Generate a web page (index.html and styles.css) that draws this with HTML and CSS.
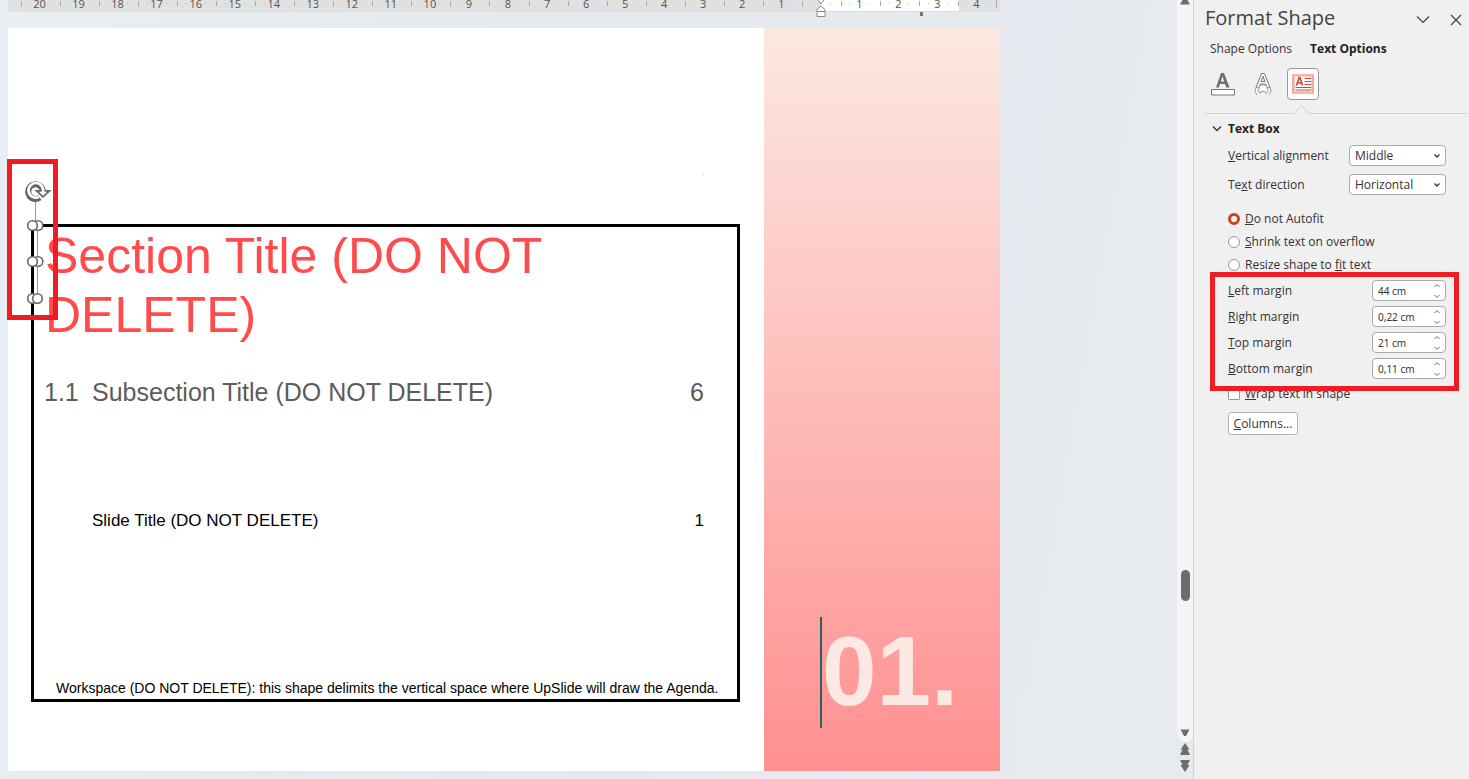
FILE: index.html
```html
<!DOCTYPE html>
<html lang="en">
<head>
<meta charset="utf-8">
<title>Format Shape</title>
<link rel="stylesheet" href="styles.css">
</head>
<body>
<div class="app">
  <main class="editor">
    <div class="ruler">
      <div class="ruler-active"></div>
      <div class="ruler-scale">
        <span>20</span><span>19</span><span>18</span><span>17</span><span>16</span><span>15</span><span>14</span><span>13</span><span>12</span><span>11</span><span>10</span><span>9</span><span>8</span><span>7</span><span>6</span><span>5</span><span>4</span><span>3</span><span>2</span><span>1</span><span></span><span>1</span><span>2</span><span>3</span><span>4</span>
      </div>
      <svg class="indent" viewBox="0 0 10 17" width="10" height="17" aria-hidden="true"><path d="M2 0 5 4 8 0M1 16.500V9.500L5 6l4 3.500v7zM1 11.500h8" fill="#fff" stroke="#888"/></svg>
      <div class="tab-stop"></div>
    </div>
    <section class="slide">
      <div class="slide-main">
        <div class="workspace">
          <h1 class="section-title">Section Title (DO NOT DELETE)</h1>
          <div class="subsection"><span class="num">1.1</span><span class="name">Subsection Title (DO NOT DELETE)</span><span>6</span></div>
          <div class="slide-row"><span class="name">Slide Title (DO NOT DELETE)</span><span>1</span></div>
          <p class="note">Workspace (DO NOT DELETE): this shape delimits the vertical space where UpSlide will draw the Agenda.</p>
        </div>
      </div>
      <div class="band"><div class="big-number">01.</div></div>
      <svg class="handles" viewBox="0 150 60 175" width="60" height="175" aria-hidden="true">
        <path d="M35.500 202v24M37.500 226v72" stroke="#999" fill="none"/>
        <g fill="#fff" stroke="#666" stroke-width="1.600">
          <circle cx="38" cy="225.500" r="4.800"/><circle cx="32.500" cy="225.500" r="4.800"/>
          <circle cx="38" cy="261.500" r="4.800"/><circle cx="32.500" cy="261.500" r="4.800"/>
          <circle cx="32.500" cy="298.500" r="4.800"/><circle cx="37.500" cy="298.500" r="4.800"/>
        </g>
        <path d="M39.800 197.600A7.300 7.300 0 1 1 42.800 191" fill="none" stroke="#666" stroke-width="6"/>
        <path d="M36.500 190.800h13l-6.500 6z" fill="#fff" stroke="#666" stroke-width="1.700"/>
        <path d="M39 196.900A7.300 7.300 0 1 1 42.800 192.500" fill="none" stroke="#fff" stroke-width="2.600"/>
      </svg>
      <div class="callout callout-handles"></div>
      <div class="speck"></div>
    </section>
  </main>

  <div class="scroll">
    <div class="track">
      <svg class="up" viewBox="0 0 10 5" width="10" height="5" aria-hidden="true"><path d="M3-1h4l3 5.500H0z" fill="#6d6d6d"/></svg>
      <div class="thumb"></div>
      <svg viewBox="0 0 10 8" width="10" height="8" aria-hidden="true"><path d="M.5.500h9L6 7H4z" fill="#6d6d6d"/></svg>
    </div>
    <svg viewBox="0 0 10 30" width="10" height="30" aria-hidden="true"><path d="M5 0l4.500 6.500h-2L10 12H0l2.500-5.500h-2zM0 17h10L7.500 22h2L5 29 .500 22h2z" fill="#6d6d6d"/></svg>
  </div>

  <aside class="pane">
    <header class="pane-head">
      <h2>Format Shape</h2>
      <button class="plain" aria-label="Pane options"><svg viewBox="0 0 14 10" width="14" height="10"><path d="M1 1.500l6 6 6-6" fill="none" stroke="#444" stroke-width="1.200"/></svg></button>
      <button class="plain" aria-label="Close"><svg viewBox="0 0 12 12" width="12" height="12"><path d="M1 1l10 10M11 1L1 11" fill="none" stroke="#444" stroke-width="1.200"/></svg></button>
    </header>
    <nav class="tabs"><button class="plain">Shape Options</button><button class="plain on">Text Options</button></nav>
    <div class="tools">
      <button class="plain tool" aria-label="Text fill and outline"><svg viewBox="0 0 26 24" width="26" height="24"><path d="M6 15.500 11 1h3l5.500 14.500h-3.300l-1.200-3.500H10l-1.100 3.500zM10.800 9.500h3.400L12.500 4z" fill="#6f6f6f"/><path d="M1.500 17.500h23v5.500h-23z" fill="#fff" stroke="#757575"/></svg></button>
      <button class="plain tool" aria-label="Text effects"><svg viewBox="0 0 18 24" width="18" height="24"><g fill="#fff" stroke="#777"><path d="M2 15.500 7.500 1.500h3L16 15.500h-3l-1.300-3.500H6.300L5 15.500zM7 9.500h4L9 4.200z"/><path d="M5 15.500 6.500 13h5l1.500 2.500h3l1 3.500-2 4M13 15.500l1 3-2 3-1-2H7l-1 2-2-3 1-3H2l-1 3.500 2 4" stroke="#999"/></g></svg></button>
      <button class="plain tool selected" aria-label="Text box"><svg viewBox="0 0 22 20" width="22" height="20"><path d="M1 1h20v18H1z" fill="#fff" stroke="#e9755c" stroke-width="1.200"/><path d="M2.500 2.500h17v15h-17z" fill="none" stroke="#f3b5a7" stroke-width=".8"/><path d="M4.500 11.500 7 3.800h1l2.500 7.700M5.500 9h4" fill="none" stroke="#d0482c" stroke-width="1.700"/><path d="M12.500 4.500H19M12.500 7.500H19M12.500 10.500H19M3.500 13.500H19M3.500 16H19" stroke="#d0482c"/></svg></button>
    </div>
    <svg class="divider" viewBox="0 0 262 10" width="262" height="10" aria-hidden="true"><path d="M0 8.500h89l7.500-8 7.500 8h158" fill="none" stroke="#cfcfcf"/></svg>

    <h3 class="group"><svg viewBox="0 0 10 8" width="10" height="8" aria-hidden="true"><path d="M1 1.500l4 4 4-4" fill="none" stroke="#333" stroke-width="1.300"/></svg>Text Box</h3>
    <div class="body">
      <div class="row select-row"><label for="va"><u>V</u>ertical alignment</label><select id="va"><option>Middle</option></select></div>
      <div class="row select-row"><label for="td">Te<u>x</u>t direction</label><select id="td"><option>Horizontal</option></select></div>
      <div class="radios">
        <label><input type="radio" name="fit" checked><span><u>D</u>o not Autofit</span></label>
        <label><input type="radio" name="fit"><span><u>S</u>hrink text on overflow</span></label>
        <label><input type="radio" name="fit"><span>Resize shape to <u>f</u>it text</span></label>
      </div>
      <div class="margins">
        <div class="row"><label for="ml"><u>L</u>eft margin</label><div class="spin"><input id="ml" type="text" value="44 cm"><svg viewBox="0 0 8 16" width="8" height="16" aria-hidden="true"><path d="M1.500 4 4 1.500 6.500 4M1.500 12 4 14.500 6.500 12"/></svg></div></div>
        <div class="row"><label for="mr"><u>R</u>ight margin</label><div class="spin"><input id="mr" type="text" value="0,22 cm"><svg viewBox="0 0 8 16" width="8" height="16" aria-hidden="true"><path d="M1.500 4 4 1.500 6.500 4M1.500 12 4 14.500 6.500 12"/></svg></div></div>
        <div class="row"><label for="mt"><u>T</u>op margin</label><div class="spin"><input id="mt" type="text" value="21 cm"><svg viewBox="0 0 8 16" width="8" height="16" aria-hidden="true"><path d="M1.500 4 4 1.500 6.500 4M1.500 12 4 14.500 6.500 12"/></svg></div></div>
        <div class="row"><label for="mb"><u>B</u>ottom margin</label><div class="spin"><input id="mb" type="text" value="0,11 cm"><svg viewBox="0 0 8 16" width="8" height="16" aria-hidden="true"><path d="M1.500 4 4 1.500 6.500 4M1.500 12 4 14.500 6.500 12"/></svg></div></div>
        <div class="callout callout-margins"></div>
      </div>
      <label class="wrap"><input type="checkbox"><span><u>W</u>rap text in shape</span></label>
      <button class="columns"><u>C</u>olumns...</button>
    </div>
  </aside>
</div>
</body>
</html>
```
FILE: styles.css
```css
* { box-sizing: border-box; }
body { margin: 0; font: 12px/18px "Open Sans", "Noto Sans", sans-serif; color: #333; background: #e7ebef; }
h1, h2, h3, p { margin: 0; font-weight: 400; }
button, input, select { font: inherit; color: inherit; margin: 0; }
.plain { border: 0; background: none; padding: 0; }
.app { display: flex; min-height: 100vh; }

.editor { flex: 1; min-width: 0; display: flex; flex-direction: column; padding: 0 177px 8px 8px; background: linear-gradient(100deg, #e8eef1, #e5e8ee 50%, #e7ebf0); }
.ruler { position: relative; height: 12px; background: #e1e1e1; border-bottom: 1px solid #dcdfe2; padding: 0 3px 0 12px; }
.ruler-active { position: absolute; top: 0; left: 813px; width: 138px; height: 11px; background: #fff; }
.ruler-scale { position: relative; display: grid; grid-template-columns: repeat(25, 1fr); font-size: 11px; line-height: 8px; height: 8px; text-align: center; color: #555;
  border-right: 1px solid #aaa; }
.ruler-scale span { background:
  linear-gradient(#aaa, #aaa) 1px 1px / 1px 5px no-repeat,
  linear-gradient(#bbb, #bbb) 10px 3px / 1px 1px no-repeat,
  linear-gradient(#bbb, #bbb) 29px 3px / 1px 1px no-repeat; }
.indent { position: absolute; left: 808px; top: 0; }
.tab-stop { position: absolute; left: 912px; top: 12px; width: 3px; height: 4px; background: #777; }

.slide { position: relative; flex: 1; display: flex; margin-top: 16px; background: #fff; font-family: "Liberation Sans", Arial, sans-serif; }
.slide-main { flex: 1; min-width: 0; display: flex; padding: 196px 24px 69px 23px; }
.workspace { flex: 1; min-width: 0; display: flex; flex-direction: column; border: 3px solid #000; padding: 0 8px 2px; color: #000; }
.section-title { font-size: 50px; line-height: 59px; color: #ff4b4b; padding: 0 150px 0 3px; }
.subsection, .slide-row { display: flex; padding-right: 25px; }
.subsection { margin-top: 32px; padding-left: 2px; font-size: 25px; line-height: 30px; color: #5c5c5c; }
.subsection .num { width: 48px; }
.name { flex: 1; }
.slide-row { margin-top: 104px; padding-left: 50px; font-size: 17px; line-height: 20px; }
.note { margin-top: auto; padding-left: 14px; font-size: 14px; line-height: 18px; white-space: nowrap; }
.band { width: 236px; display: flex; align-items: flex-end; padding: 0 0 43px 56px; background: linear-gradient(#fce8e2, #ff9090); }
.big-number { border-left: 2px solid #2a6062; font-size: 98px; line-height: 109px; padding-bottom: 2px; font-weight: 700; color: #fde9e3; }
.handles { position: absolute; left: -8px; top: 122px; }
.callout { position: absolute; border: 5px solid #ee1c25; pointer-events: none; }
.callout-handles { left: -1px; top: 131px; width: 51px; height: 161px; }
.speck { position: absolute; left: 695px; top: 146px; width: 1px; height: 1px; background: #bbb; }

.scroll { width: 16px; display: flex; flex-direction: column; align-items: center; padding-bottom: 6px; gap: 1px; background: #e6eaef; }
.track { flex: 1; width: 100%; display: flex; flex-direction: column; align-items: center; justify-content: space-between; padding-bottom: 5px; background: #f5f5f5; border-radius: 0 0 8px 8px; }
.thumb { width: 9px; height: 31px; border-radius: 5px; background: #6d6d6d; margin: 436px 0 0; }

.pane { width: 276px; background: #f0f0f0; border-left: 1px solid #d4d4d4; padding: 4px 3px 0 11px; }
.pane-head { display: flex; align-items: center; gap: 20px; height: 28px; padding-right: 4px; }
.pane-head h2 { flex: 1; font-size: 20px; line-height: 28px; color: #444; }
.pane-head button { height: 12px; line-height: 0; margin-top: 4px; }
.tabs { display: flex; gap: 18px; padding-left: 5px; margin-top: 8px; }
.tabs .on { font-weight: 700; color: #222; }
.tools { display: flex; align-items: center; gap: 18px; margin-top: 10px; padding-left: 5px; height: 32px; }
.tool { line-height: 0; }
.selected { display: grid; place-items: center; width: 32px; height: 32px; margin-left: -3px; background: #fff; border: 1px solid #999; border-radius: 4px; }
.divider { display: block; margin-top: 5px; }
.group { display: flex; align-items: center; gap: 6px; margin-top: 5px; padding-left: 7px; line-height: 18px; font-size: 12px; font-weight: 700; color: #222; }
.body { padding: 7px 20px 0 23px; }
.row { display: flex; align-items: center; justify-content: space-between; }
.select-row { height: 21px; margin-bottom: 8px; }
.select-row select { width: 97px; height: 21px; padding: 0 5px; appearance: none; border: 1px solid #aaa; border-radius: 4px; color: #333;
  background: #fff url("data:image/svg+xml,%3Csvg xmlns='http://www.w3.org/2000/svg' width='8' height='6'%3E%3Cpath d='M1.500 1.500 4 4l2.500-2.500' fill='none' stroke='%23333' stroke-width='1.300'/%3E%3C/svg%3E") right 4px center no-repeat; }
.radios { display: flex; flex-direction: column; gap: 5px; margin-top: 15px; }
.radios label, .wrap { display: flex; align-items: center; gap: 5px; height: 18px; }
.radios input { appearance: none; width: 12px; height: 12px; border: 1px solid #999; border-radius: 50%; background: #fff; }
.radios input:checked { border: 3px solid #c9431f; }
.margins { position: relative; display: flex; flex-direction: column; gap: 5px; margin-top: 6px; }
.spin { display: flex; align-items: center; width: 74px; height: 21px; padding: 0 4px 0 5px; border: 1px solid #aaa; border-radius: 4px; background: #fff; }
.spin input { flex: 1; min-width: 0; width: 40px; border: 0; padding: 0; background: none; font-family: "Noto Sans", sans-serif; font-size: 10px; outline: 0; height: 18px; }
.spin path { fill: none; stroke: #666; }
.callout-margins { left: -18px; right: -13px; top: -8px; bottom: -12px; }
.wrap { margin-top: 6px; }
.wrap input { appearance: none; width: 12px; height: 12px; border: 1px solid #999; border-radius: 1px; background: #fff; }
.columns { display: block; margin-top: 9px; width: 70px; height: 23px; padding: 0; border: 1px solid #b5b5b5; border-radius: 3px; background: #fff; }
```
